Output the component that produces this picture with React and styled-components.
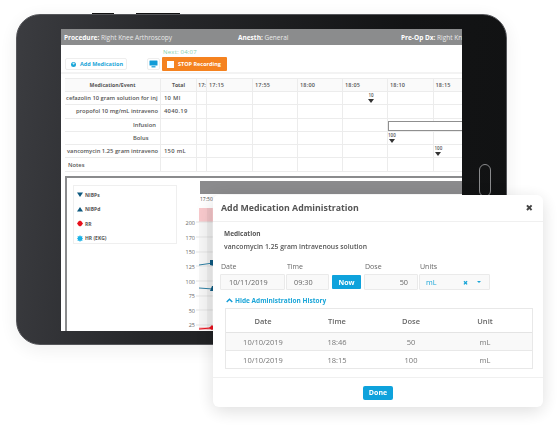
import React from "react";
import styled, { createGlobalStyle } from "styled-components";

const timeColumns = ["17:", "17:15", "17:55", "18:00", "18:05", "18:10", "18:15"];

const rows = [
  { label: "cefazolin 10 gram solution for inj", total: "10 Ml", pad: 1 },
  { label: "propofol 10 mg/mL intraveno", total: "4040.19", pad: 11 },
  { label: "Infusion", total: "", pad: 68 },
  { label: "Bolus", total: "", pad: 68 },
  { label: "vancomycin 1.25 gram intraveno", total: "150 mL", pad: 2 },
  { label: "Notes", total: "", pad: 3 },
];

const markers = {
  "0-4": { value: "10", left: 25 },
  "3-5": { value: "100", left: 0 },
  "4-6": { value: "100", left: 1 },
};

const legend = [
  { name: "NIBPs", shape: "down" },
  { name: "NIBPd", shape: "up" },
  { name: "RR", shape: "diamond" },
  { name: "HR (EKG)", shape: "star" },
];

const axis = ["200", "170", "150", "125", "100", "75", "50", "25"];

const history = [
  { date: "10/10/2019", time: "18:46", dose: "50", unit: "mL", shade: true },
  { date: "10/10/2019", time: "18:15", dose: "100", unit: "mL" },
];

const LegendIcon = ({ shape }) => {
  const shapes = {
    down: <polygon points="0,1.5 6,1.5 3,6" fill="#0f5a80" />,
    up: <polygon points="0,5.5 6,5.5 3,1" fill="#0f5a80" />,
    diamond: <polygon points="3,0.5 4.5,1.5 6,3.5 4.5,5.5 3,6.5 1.5,5.5 0,3.5 1.5,1.5" fill="#e8101c" />,
    star: (
      <polygon
        points="3,0 3.8,1.4 5.5,1 5,2.6 6,3.5 5,4.4 5.5,6 3.8,5.6 3,7 2.2,5.6 0.5,6 1,4.4 0,3.5 1,2.6 0.5,1 2.2,1.4"
        fill="#17b1e6"
      />
    ),
  };
  return (
    <svg width="6" height="7" viewBox="0 0 6 7">
      {shapes[shape]}
    </svg>
  );
};

const App = () => {
  return (
    <Page>
      <GlobalStyle />
      <Tablet>
        <TopButton $left={92} $width={22} />
        <TopButton $left={136} $width={44} />
        <HomeButton />
        <Screen>
          <HeaderBar>
            <HeaderItem>
              <b>Procedure:</b> Right Knee Arthroscopy
            </HeaderItem>
            <HeaderItem>
              <b>Anesth:</b> General
            </HeaderItem>
            <HeaderItem>
              <b>Pre-Op Dx:</b> Right Knee
            </HeaderItem>
          </HeaderBar>
          <NextLabel>Next: 04:07</NextLabel>
          <Toolbar>
            <AddButton>
              <AddDot>+</AddDot>
              Add Medication
            </AddButton>
            <MonitorButton>
              <svg width="9" height="8" viewBox="0 0 9 8">
                <rect x="0.5" y="0.5" width="8" height="5" rx="0.5" fill="#0f9bd7" />
                <rect x="2.5" y="6.2" width="4" height="1.2" fill="#0f9bd7" />
              </svg>
            </MonitorButton>
            <StopButton>
              <StopSquare />
              STOP Recording
            </StopButton>
          </Toolbar>
          <MedTable>
            <HeadCell $center>Medication/Event</HeadCell>
            <HeadCell $center>Total</HeadCell>
            {timeColumns.map((time, c) => (
              <TimeCell key={time} $narrow={c === 0}>
                {time}
              </TimeCell>
            ))}
            {rows.map((row, r) => (
              <React.Fragment key={row.label}>
                <LabelCell $pad={row.pad}>{row.label}</LabelCell>
                <TotalCell>{row.total}</TotalCell>
                {timeColumns.map((time, c) => {
                  const marker = markers[`${r}-${c}`];
                  return (
                    <BodyCell key={time}>
                      {marker && (
                        <Marker $left={marker.left}>
                          {marker.value}
                          <MarkerArrow />
                        </Marker>
                      )}
                      {r === 2 && c === 5 && <InfusionBar />}
                    </BodyCell>
                  );
                })}
              </React.Fragment>
            ))}
          </MedTable>
          <ChartPanel>
            <Legend>
              {legend.map((item) => (
                <LegendRow key={item.name}>
                  <LegendIcon shape={item.shape} />
                  {item.name}
                </LegendRow>
              ))}
            </Legend>
            <ChartColumn>
              <ChartBar />
              <ChartTime>17:50</ChartTime>
              <ChartBody>
                <AxisLabels>
                  {axis.map((value) => (
                    <span key={value}>{value}</span>
                  ))}
                </AxisLabels>
                <PlotSvg width="265" height="122" viewBox="-3 0 265 122">
                  <rect x="0" y="0" width="16" height="14" fill="#f8c9cc" />
                  <rect x="0" y="14" width="16" height="106" fill="#f6f6f6" />
                  <rect x="0" y="119" width="16" height="3" fill="#f8c9cc" />
                  <path
                    d="M-3 14H16M-3 29H16M-3 44H16M-3 58H16M-3 73H16M-3 88H16M-3 102H16M-3 117H16"
                    stroke="#e3e3e3"
                  />
                  <rect x="8" y="0" width="5" height="122" fill="#000" opacity="0.04" />
                  <path d="M0 57L14 55M0 80L14 81" stroke="#2f7fa3" strokeWidth="1" />
                  <polygon points="11,52 15,52 15,58 11,57" fill="#0f5a80" />
                  <polygon points="11,83 15,83 15,78 13,78" fill="#0f5a80" />
                  <path d="M0 121L12 120" stroke="#e8101c" strokeWidth="1.2" />
                  <polygon points="13,117 16,120 13,122 10,120" fill="#e8101c" />
                </PlotSvg>
              </ChartBody>
            </ChartColumn>
          </ChartPanel>
        </Screen>
      </Tablet>
      <Modal>
        <ModalHeader>
          <ModalTitle>Add Medication Administration</ModalTitle>
          <CloseButton>✖</CloseButton>
        </ModalHeader>
        <ModalBody>
          <FieldHeading>Medication</FieldHeading>
          <MedName>vancomycin 1.25 gram intravenous solution</MedName>
          <FormRow>
            <Field $width={65}>
              <FieldLabel>Date</FieldLabel>
              <FieldBox $pad={8}>10/11/2019</FieldBox>
            </Field>
            <Field $width={43}>
              <FieldLabel>Time</FieldLabel>
              <FieldBox $pad={7}>09:30</FieldBox>
            </Field>
            <NowButton>Now</NowButton>
            <Field $width={54}>
              <FieldLabel>Dose</FieldLabel>
              <FieldBox $right>50</FieldBox>
            </Field>
            <Field $width={71}>
              <FieldLabel>Units</FieldLabel>
              <UnitsBox>
                mL
                <UnitsControls>
                  <span>✖</span>
                  <Caret />
                </UnitsControls>
              </UnitsBox>
            </Field>
          </FormRow>
          <HistoryToggle>
            <svg width="7" height="5" viewBox="0 0 7 5">
              <path d="M0.7 4L3.5 1.3L6.3 4" fill="none" stroke="#0f9bd7" strokeWidth="1.4" />
            </svg>
            Hide Administration History
          </HistoryToggle>
          <HistoryTable>
            <HistoryHead>
              <span>Date</span>
              <span>Time</span>
              <span>Dose</span>
              <span>Unit</span>
            </HistoryHead>
            {history.map((item) => (
              <HistoryRow key={item.time} $shade={item.shade}>
                <span>{item.date}</span>
                <span>{item.time}</span>
                <span>{item.dose}</span>
                <span>{item.unit}</span>
              </HistoryRow>
            ))}
          </HistoryTable>
        </ModalBody>
        <ModalFooter>
          <DoneButton>Done</DoneButton>
        </ModalFooter>
      </Modal>
    </Page>
  );
};

export default App;

const GlobalStyle = createGlobalStyle`
  html, body {
    margin: 0;
    background: #fff;
    overflow: hidden;
  }
`;

const Page = styled.div`
  position: relative;
  width: 560px;
  height: 425px;
  padding: 14px 0 0 16px;
  box-sizing: border-box;
  font-family: "Open Sans", "Liberation Sans", sans-serif;
  color: #4a4a4a;
  overflow: hidden;
  opacity: 0.999;
  filter: blur(0.3px);
`;

const Tablet = styled.div`
  position: relative;
  box-sizing: border-box;
  width: 491px;
  height: 331px;
  padding: 14px 44px 13px 44px;
  border-radius: 24px;
  background: linear-gradient(95deg, #3b3c40 0%, #26272a 30%, #131415 75%, #111213 100%);
  border: 1px solid #55565a;
  box-shadow: 0 4px 22px rgba(0, 0, 0, 0.08);
`;

const TopButton = styled.div`
  position: absolute;
  top: -2px;
  left: ${(p) => p.$left - 17}px;
  width: ${(p) => p.$width}px;
  height: 1px;
  background: #111;
`;

const HomeButton = styled.div`
  position: absolute;
  right: 15px;
  top: 149px;
  width: 10px;
  height: 31px;
  border: 1px solid #8a8b8d;
  border-radius: 6px;
`;

const Screen = styled.div`
  display: flex;
  flex-direction: column;
  width: 401px;
  height: 302px;
  background: #fff;
  overflow: hidden;
`;

const HeaderBar = styled.div`
  display: flex;
  flex: none;
  height: 16px;
  padding-left: 3px;
  align-items: center;
  background: #8b8c8d;
  color: #e9e9e9;
  font-size: 6.5px;
  white-space: nowrap;

  b {
    color: #fff;
    font-weight: 700;
  }
`;

const HeaderItem = styled.div`
  &:nth-child(1) {
    width: 174px;
    flex: none;
  }
  &:nth-child(2) {
    width: 163px;
    flex: none;
  }
`;

const NextLabel = styled.div`
  margin: 2px 0 0 102px;
  height: 10px;
  font-size: 6px;
  line-height: 10px;
  letter-spacing: 0.2px;
  color: #7fd0ad;
`;

const Toolbar = styled.div`
  display: flex;
  flex: none;
  align-items: center;
  height: 14px;
  padding: 0 0 1px 4px;
  border-bottom: 2px solid #f3f3f3;
`;

const AddButton = styled.div`
  display: flex;
  align-items: center;
  gap: 4px;
  box-sizing: border-box;
  width: 62px;
  height: 12px;
  padding-left: 5px;
  border: 1px solid #eee;
  border-radius: 2px;
  font-size: 5.5px;
  font-weight: 700;
  color: #19a5d8;
  white-space: nowrap;
`;

const AddDot = styled.span`
  display: flex;
  align-items: center;
  justify-content: center;
  width: 5px;
  height: 5px;
  border-radius: 50%;
  background: #19a5d8;
  color: #fff;
  font-size: 5px;
  line-height: 5px;
`;

const MonitorButton = styled.div`
  display: flex;
  align-items: center;
  justify-content: center;
  box-sizing: border-box;
  width: 13px;
  height: 12px;
  margin-left: 20px;
  border: 1px solid #eee;
  border-radius: 2px;
`;

const StopButton = styled.div`
  display: flex;
  align-items: center;
  gap: 4px;
  box-sizing: border-box;
  width: 65px;
  height: 14px;
  margin-left: 2px;
  padding-left: 5px;
  border-radius: 1px;
  background: #f5821f;
  color: #fff;
  font-size: 5.5px;
  font-weight: 700;
  white-space: nowrap;
`;

const StopSquare = styled.span`
  width: 7px;
  height: 7px;
  background: #fff;
`;

const MedTable = styled.div`
  display: grid;
  flex: none;
  grid-template-columns: 96px 36px 10px 46px 45px 45px 45px 45.5px 45px;
  grid-template-rows: 14px repeat(6, 13.3px);
  width: 397px;
  margin: 4px 0 0 4px;
  box-sizing: border-box;
  font-size: 5.8px;
  font-weight: 600;
  color: #555;
  white-space: nowrap;
`;

const Cell = styled.div`
  position: relative;
  display: flex;
  align-items: center;
  box-sizing: border-box;
  border-right: 1px solid #ececec;
  border-bottom: 1px solid #ececec;
`;

const HeadCell = styled(Cell)`
  justify-content: ${(p) => (p.$center ? "center" : "flex-start")};
  background: #fafafa;
  border-top: 1px solid #ececec;
  font-size: 5.2px;
  font-weight: 700;
  color: #555;
`;

const TimeCell = styled(HeadCell)`
  padding-left: ${(p) => (p.$narrow ? 1 : 2)}px;
  font-size: 5.5px;
  font-weight: 600;
  letter-spacing: ${(p) => (p.$narrow ? 0 : 0.2)}px;
  overflow: hidden;
`;

const LabelCell = styled(Cell)`
  padding-left: ${(p) => p.$pad}px;
  overflow: hidden;
`;

const TotalCell = styled(Cell)`
  padding-left: 3px;
  letter-spacing: 0.3px;
`;

const BodyCell = styled(Cell)``;

const Marker = styled.div`
  position: absolute;
  top: 1px;
  left: ${(p) => p.$left}px;
  display: flex;
  flex-direction: column;
  align-items: center;
  font-size: 4.5px;
  line-height: 5px;
  font-weight: 600;
`;

const MarkerArrow = styled.span`
  width: 0;
  height: 0;
  margin-top: 1px;
  border-left: 3px solid transparent;
  border-right: 3px solid transparent;
  border-top: 4px solid #333;
`;

const InfusionBar = styled.div`
  position: absolute;
  top: 2px;
  left: 0;
  width: 90px;
  height: 10px;
  box-sizing: border-box;
  border: 1px solid #8f8f8f;
  background: #fff;
`;

const ChartPanel = styled.div`
  display: flex;
  flex: none;
  height: 160px;
  width: 420px;
  margin: 4px 0 0 4px;
  padding: 3px 0 0 6px;
  box-sizing: border-box;
  border: 2px solid #8a8b8d;
  border-right: none;
`;

const Legend = styled.div`
  display: flex;
  flex-direction: column;
  gap: 6.5px;
  box-sizing: border-box;
  flex: none;
  width: 104px;
  height: 59px;
  margin-top: 4px;
  padding: 5px 0 0 3px;
  border: 1px solid #efefef;
`;

const LegendRow = styled.div`
  display: flex;
  align-items: center;
  gap: 2px;
  height: 8px;
  font-size: 5px;
  font-weight: 700;
  color: #555;
`;

const ChartColumn = styled.div`
  display: flex;
  flex-direction: column;
  margin-left: 8px;
`;

const ChartBar = styled.div`
  width: 262px;
  height: 13px;
  margin-left: 15px;
  background: #8b8b8d;
`;

const ChartTime = styled.div`
  margin: 1px 0 0 15px;
  height: 9px;
  font-size: 5px;
  line-height: 9px;
`;

const ChartBody = styled.div`
  display: flex;
  gap: 1px;
`;

const PlotSvg = styled.svg`
  margin-top: 4px;
`;

const AxisLabels = styled.div`
  display: flex;
  flex-direction: column;
  align-items: flex-end;
  gap: 8.6px;
  width: 10px;
  padding-top: 16.5px;
  font-size: 5.5px;
  line-height: 6px;
  color: #666;
`;

const Modal = styled.div`
  position: absolute;
  left: 213px;
  top: 195px;
  display: flex;
  flex-direction: column;
  width: 330px;
  height: 212px;
  background: #fff;
  border-radius: 6px;
  box-shadow: 0 4px 18px rgba(0, 0, 0, 0.14);
`;

const ModalHeader = styled.div`
  display: flex;
  flex: none;
  align-items: center;
  justify-content: space-between;
  box-sizing: border-box;
  height: 27px;
  padding: 0 10px 0 8px;
  border-bottom: 1px solid #f0f0f0;
`;

const ModalTitle = styled.div`
  font-size: 8.8px;
  font-weight: 700;
  color: #555;
`;

const CloseButton = styled.div`
  font-family: "DejaVu Sans", sans-serif;
  font-size: 9px;
  color: #444;
`;

const ModalBody = styled.div`
  flex: 1;
  padding: 7px 10px 0 7px;
`;

const FieldHeading = styled.div`
  margin-left: 4px;
  height: 10px;
  font-size: 6.5px;
  line-height: 10px;
  font-weight: 700;
  color: #555;
`;

const MedName = styled.div`
  margin: 3px 0 0 4px;
  height: 10px;
  font-size: 6.8px;
  line-height: 10px;
  font-weight: 600;
  color: #555;
`;

const FormRow = styled.div`
  display: flex;
  align-items: flex-end;
  gap: 1px;
  margin-top: 9px;
`;

const Field = styled.div`
  display: flex;
  flex-direction: column;
  width: ${(p) => p.$width}px;
`;

const FieldLabel = styled.div`
  height: 11px;
  margin: 0 0 2px 1px;
  font-size: 7px;
  line-height: 11px;
  color: #666;
`;

const FieldBox = styled.div`
  display: flex;
  align-items: center;
  justify-content: ${(p) => (p.$right ? "flex-end" : "flex-start")};
  box-sizing: border-box;
  height: 16px;
  padding: 0 ${(p) => (p.$right ? 9 : 0)}px 0 ${(p) => p.$pad || 0}px;
  background: #f9f9f9;
  border: 1px solid #eaeaea;
  border-radius: 1px;
  font-size: 7.3px;
  color: #666;
`;

const NowButton = styled.div`
  display: flex;
  align-items: center;
  justify-content: center;
  width: 29px;
  height: 14px;
  margin: 0 2px 1px 2px;
  border-radius: 1px;
  background: #0ea2dc;
  color: #fff;
  font-size: 7px;
  font-weight: 700;
`;

const UnitsBox = styled(FieldBox)`
  justify-content: space-between;
  padding: 0 8px 0 6px;
  color: #19a5d8;
`;

const UnitsControls = styled.div`
  display: flex;
  align-items: center;
  gap: 9px;
  font-family: "DejaVu Sans", sans-serif;
  font-size: 6px;
`;

const Caret = styled.span`
  width: 0;
  height: 0;
  border-left: 2px solid transparent;
  border-right: 2px solid transparent;
  border-top: 2px solid #19a5d8;
`;

const HistoryToggle = styled.div`
  display: flex;
  align-items: center;
  gap: 2px;
  height: 10px;
  margin: 5px 0 0 6px;
  font-size: 6.5px;
  font-weight: 700;
  color: #19a5d8;
`;

const HistoryTable = styled.div`
  box-sizing: border-box;
  width: 308px;
  margin: 3px 0 0 5px;
  border: 1px solid #e8e8e8;
`;

const historyColumns = `
  display: grid;
  grid-template-columns: 74px 74px 74px 74px;
  align-items: center;
  text-align: center;
  padding-right: 10px;
`;

const HistoryHead = styled.div`
  ${historyColumns}
  height: 23px;
  border-bottom: 1px solid #e4e4e4;
  font-size: 7.5px;
  font-weight: 600;
  color: #666;
`;

const HistoryRow = styled.div`
  ${historyColumns}
  height: 17px;
  background: ${(p) => (p.$shade ? "#f9f9f9" : "#fff")};
  border-bottom: 1px solid #e8e8e8;
  font-size: 7.5px;
  color: #777;
  &:last-child {
    border-bottom: none;
  }
`;

const ModalFooter = styled.div`
  display: flex;
  flex: none;
  justify-content: center;
  align-items: center;
  box-sizing: border-box;
  height: 30px;
  border-top: 1px solid #f0f0f0;
`;

const DoneButton = styled.div`
  display: flex;
  align-items: center;
  justify-content: center;
  width: 30px;
  height: 14px;
  border-radius: 2px;
  background: #0ea2dc;
  color: #fff;
  font-size: 7px;
  font-weight: 700;
`;
